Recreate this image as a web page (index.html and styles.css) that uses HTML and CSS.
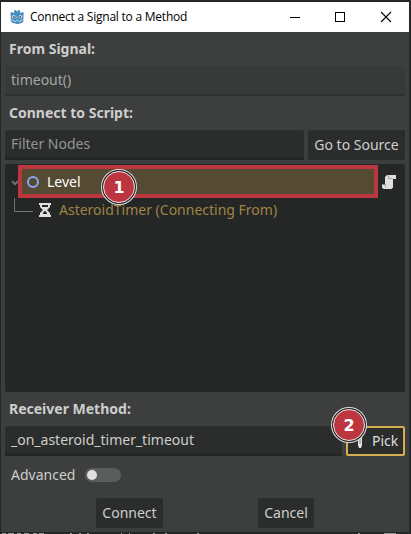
FILE: index.html
```html
<!DOCTYPE html>
<html lang="en">
<head>
<meta charset="utf-8">
<title>Connect a Signal to a Method</title>
<link rel="stylesheet" href="styles.css">
</head>
<body>
<div class="window">
  <header class="titlebar">
    <svg class="logo" width="16" height="16" viewBox="0 0 16 16">
      <path fill="#478cbf" d="M1.2 4.2 2.8 3l1.5.9.9-.4L5 1.500l2-.6.8 1.600h.6L9.200.900l2 .6-.2 2 .9.4 1.500-.9 1.600 1.200-.6 1.800v5.500c0 2-3 3.400-6.300 3.400S1.800 13.500 1.800 11.500V6z"/>
      <circle cx="4.800" cy="7.800" r="1.700" fill="#dcebf5"/><circle cx="11.400" cy="7.800" r="1.700" fill="#dcebf5"/>
      <circle cx="5" cy="7.900" r=".9" fill="#414042"/><circle cx="11.200" cy="7.900" r=".9" fill="#414042"/>
      <path d="M8.100 7.500v2M2 10.800l2.500.3.300 1.300h2l.3-.9h2l.3.9h2l.3-1.300 2.500-.3" fill="none" stroke="#c9e0f0" stroke-width=".8"/>
    </svg>
    <h1 class="title">Connect a Signal to a Method</h1>
    <svg class="controls" width="102" height="12" viewBox="0 0 102 12" fill="none" stroke="#000">
      <path d="M0 6.500h10M45.500 1.500h9v9h-9z" shape-rendering="crispEdges"/>
      <path d="m91 1 10 10m0-10L91 11" stroke-width="1.100"/>
    </svg>
  </header>
  <main class="content">
    <h2 class="label">From Signal:</h2>
    <div class="field readonly">timeout()</div>
    <h2 class="label">Connect to Script:</h2>
    <div class="row">
      <div class="field placeholder">Filter Nodes</div>
      <button class="button source">Go to Source</button>
    </div>
    <div class="tree">
      <div class="item">
        <svg class="chevron" width="8" height="6" viewBox="0 0 8 6"><path d="m1 1.200 3 3 3-3" fill="none" stroke="#747676" stroke-width="1.800"/></svg>
        <div class="selected">
          <svg width="12" height="12" viewBox="0 0 12 12"><circle cx="6" cy="6" r="5" fill="none" stroke="#8da5f3" stroke-width="2"/></svg>
          <span>Level</span>
          <span class="badge one">1</span>
        </div>
        <svg class="script" width="14" height="14" viewBox="0 0 14 14"><path fill="#e0e0e0" d="M5 0h9v4h-3v8.500L9.500 14H1.500L0 12.500V9.500h3V2z"/><path fill="none" stroke="#a5a7a7" d="M6.500.500v3H11M3.500 9v3.500"/></svg>
      </div>
      <div class="child">
        <svg width="19" height="14" viewBox="0 0 19 14"><path d="M.5 0v13.500H19" fill="none" stroke="#747676"/></svg>
        <svg class="timer" width="12" height="14" viewBox="0 0 12 14"><path fill="#e0e0e0" d="M0 0h12v2h-1v2L8 7l3 3v2h1v2H0v-2h1v-2l3-3-3-3V2H0z"/><path fill="#252726" d="M3 2h6v2H3zM5.500 8h1l1.500 2v1H4v-1z"/></svg>
        <span>AsteroidTimer (Connecting From)</span>
      </div>
    </div>
    <h2 class="label receiver">Receiver Method:</h2>
    <div class="row">
      <div class="field">_on_asteroid_timer_timeout</div>
      <button class="button pick">
        <svg width="4" height="14" viewBox="0 0 4 14"><path fill="#e8e8e8" d="M0 0h4v11l-1 3H1l-1-3z"/><path stroke="#777" d="M2 2v8"/></svg>
        <span>Pick</span>
        <span class="badge two">2</span>
      </button>
    </div>
    <div class="advanced"><span>Advanced</span><span class="toggle"></span></div>
    <div class="actions"><button class="button connect">Connect</button><button class="button cancel">Cancel</button></div>
  </main>
</div>
<svg class="backdrop" width="411" height="1" viewBox="0 0 411 1" shape-rendering="crispEdges">
  <path stroke="#999b9b" d="M1 .5h4m2 0h6m3 0h4m3 0h5m4 0h4m2 0h5m26 0h2m7 0h2m6 0h2m32 0h1m7 0h1m23 0h2m10 0h2m30 0h2m159 0h2m24 0h12"/>
</svg>
</body>
</html>
```
FILE: styles.css
```css
* { box-sizing: border-box; }
body {
  margin: 0;
  width: 411px;
  height: 534px;
  overflow: hidden;
  background: #252627;
  padding: 2px 2px 0 1px;
  font: 14px/20px "Noto Sans", sans-serif;
  color: #cdcecd;
}
.window { height: 530px; background: #3d3f3e; }
.titlebar {
  height: 30px;
  display: flex;
  align-items: center;
  padding: 0 17px 0 8px;
  background: #fff;
  color: #000;
}
.title {
  margin: 0 auto 0 5px;
  font: 12px/16px "Open Sans", sans-serif;
  letter-spacing: -.23px;
  white-space: nowrap;
}
.content { padding: 0 4px; }
.label {
  margin: 0;
  height: 34px;
  padding-left: 4px;
  font-size: 14px;
  line-height: 34px;
  font-weight: 700;
}
.row { display: flex; gap: 4px; }
.field {
  flex: 1;
  height: 30px;
  padding: 4px 6px;
  background: #2b2d2c;
  border-bottom: 2px solid #242625;
  border-radius: 2px 2px 0 0;
  white-space: nowrap;
}
.readonly { background: #383a39; border-color: #303231; color: #a5a7a6; }
.placeholder { color: #949695; }
.button {
  height: 30px;
  padding: 0;
  border: 0;
  border-radius: 2px;
  background: #2b2d2c;
  font: inherit;
  color: inherit;
  white-space: nowrap;
}
.source { width: 97px; }
.tree {
  height: 228px;
  margin-top: 4px;
  padding-top: 1px;
  background: #252726;
  border-radius: 2px;
}
.item { display: flex; align-items: center; }
.chevron { margin: 2px 0 0 6px; flex: none; }
.selected {
  position: relative;
  display: flex;
  align-items: center;
  gap: 8px;
  width: 360px;
  height: 33px;
  margin-left: -1px;
  padding-left: 5px;
  background: #554a33;
  border: 4px solid #bb363f;
  color: #fff;
}
.script { margin-left: 4px; }
.child { display: flex; align-items: center; height: 24px; padding-left: 9px; color: #9e8545; }
.child svg:first-child { margin-bottom: 10px; }
.timer { margin: 0 8px 0 6px; }
.badge {
  position: absolute;
  width: 32px;
  height: 32px;
  border-radius: 50%;
  border: 1px solid #e8e8e8;
  box-shadow: 0 0 0 1px #222, 0 0 0 2px #ddd;
  background: #bd353e;
  color: #fff;
  font: 700 16px/31px "DejaVu Sans", sans-serif;
  text-align: center;
}
.one { left: 81px; top: 2px; }
.two { left: -15px; top: -19px; }
.pick {
  position: relative;
  display: flex;
  align-items: center;
  width: 59px;
  padding-left: 10px;
  gap: 10px;
  border: 2px solid #d5ac50;
  color: #dedede;
}
.advanced { display: flex; align-items: center; height: 38px; padding-left: 6px; gap: 10px; }
.toggle { width: 36px; height: 14px; border-radius: 7px; background: #5c5e5d; padding: 2px; }
.toggle::before { content: ""; display: block; width: 10px; height: 10px; border-radius: 50%; background: #e0e0e0; }
.actions { display: flex; gap: 95px; padding: 4px 0 0 91px; }
.connect { width: 67px; }
.cancel { width: 56px; }
.backdrop { display: block; margin-top: 1px; }
```
